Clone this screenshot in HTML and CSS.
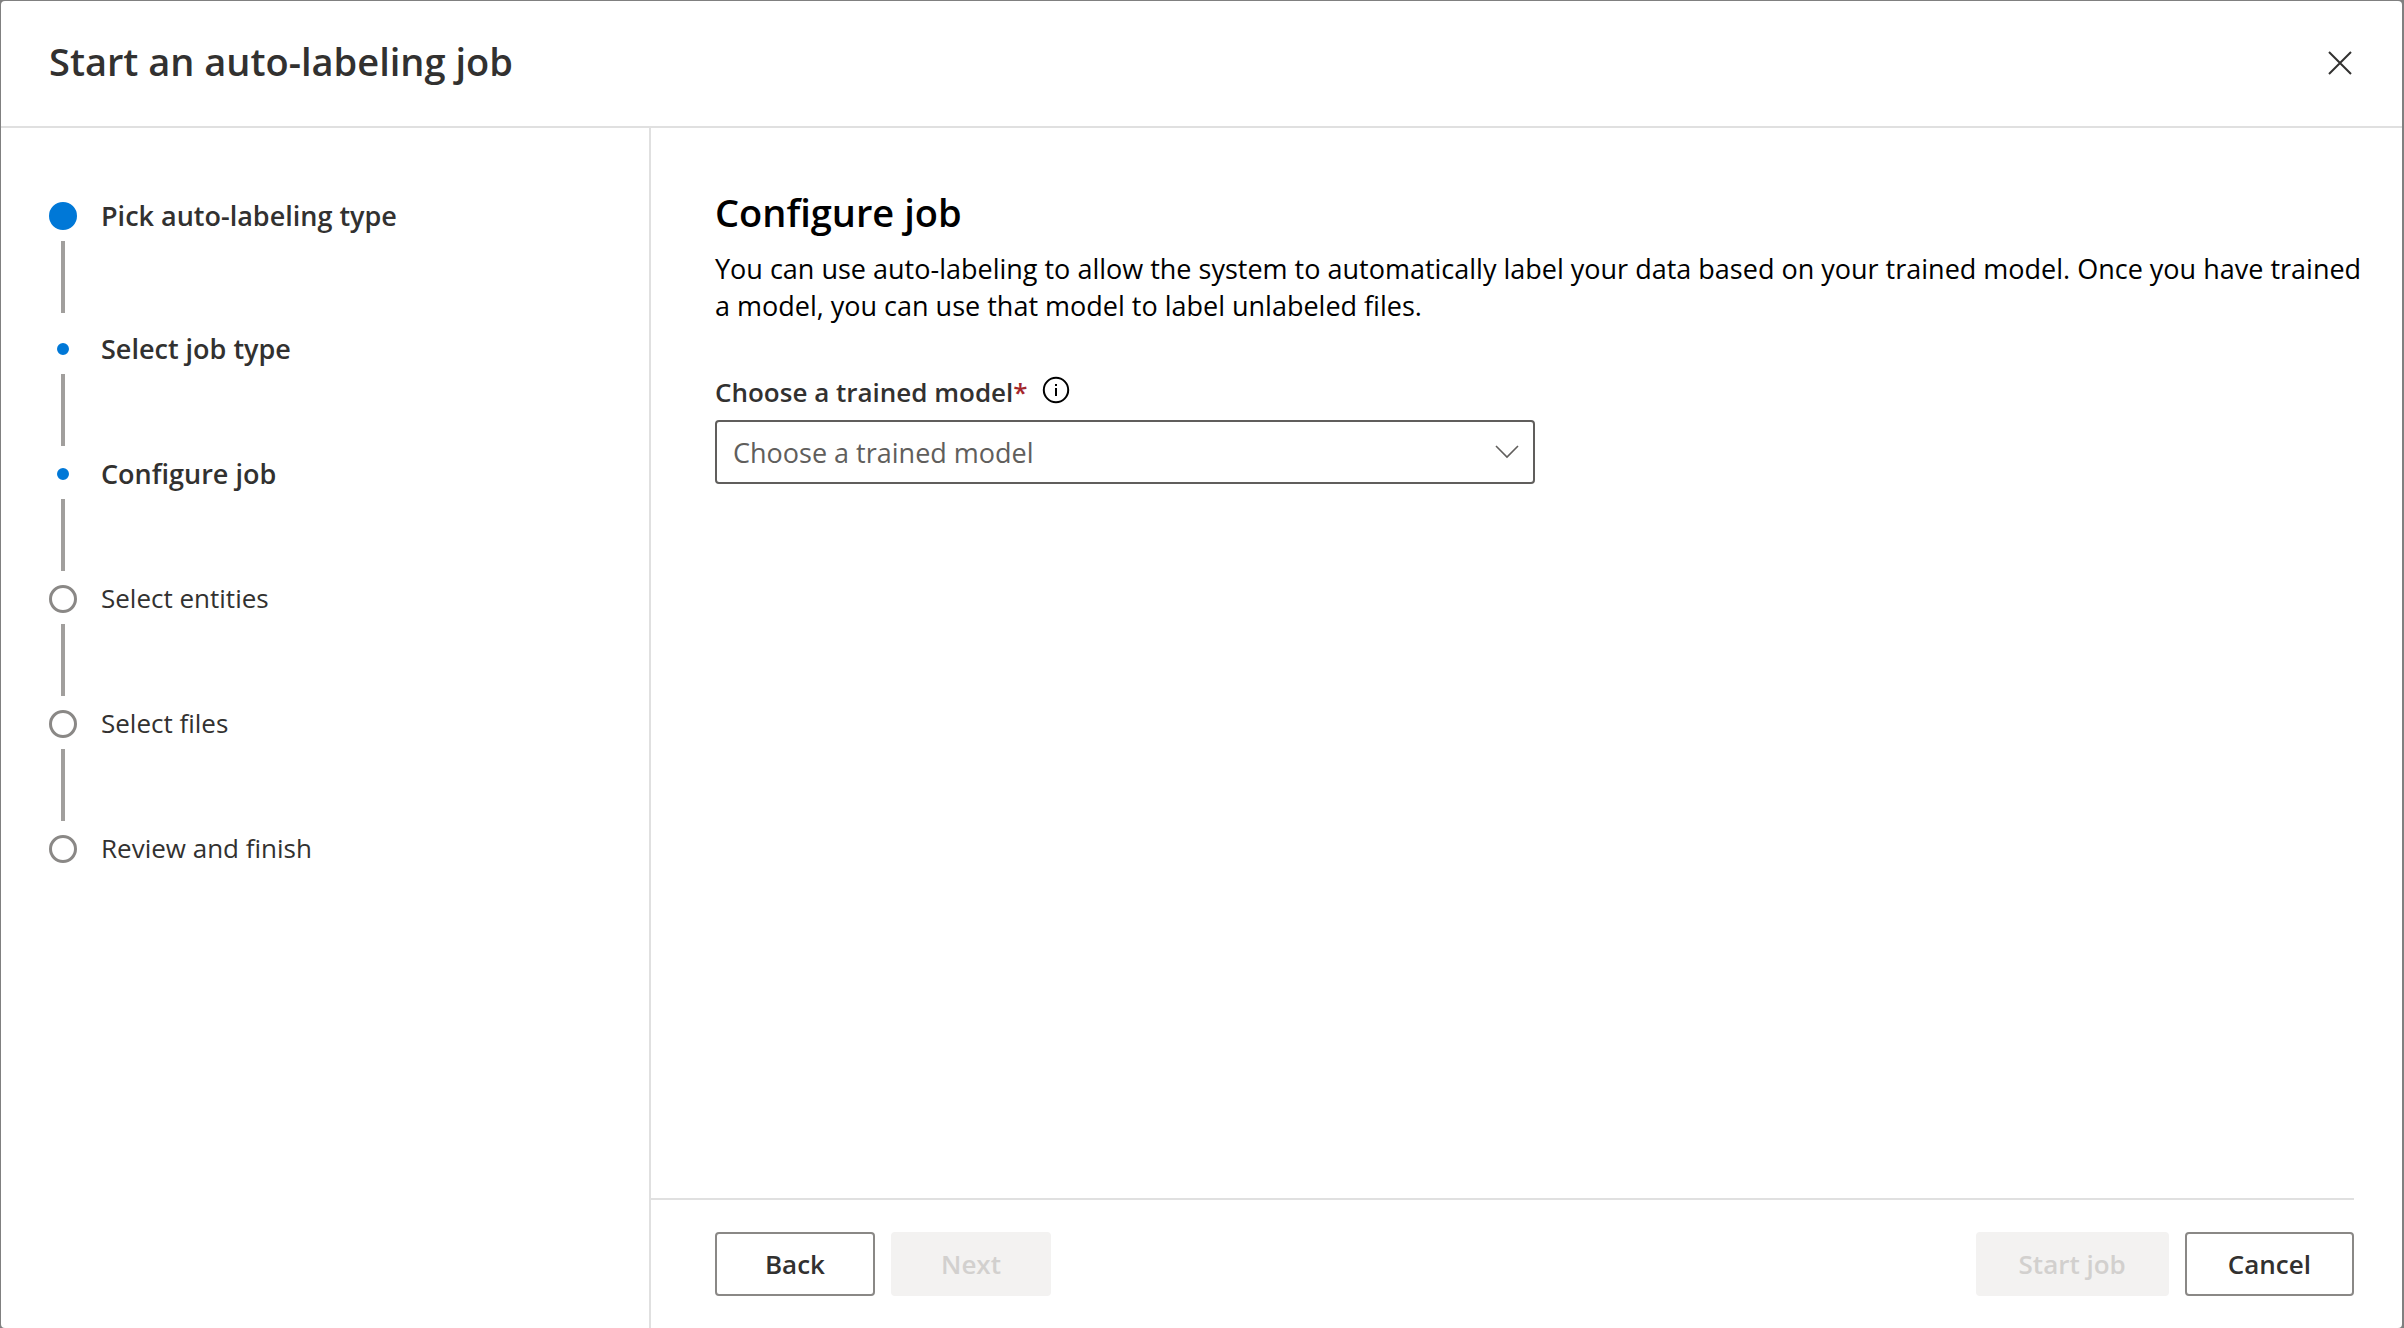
FILE: index.html
```html
<!DOCTYPE html>
<html lang="en">
<head>
    <meta charset="UTF-8">
    <meta name="viewport" content="width=device-width, initial-scale=1.0">
    <title>Start an auto-labeling job</title>
    <link rel="stylesheet" href="styles.css">
</head>
<body>
    <div class="dialog" role="dialog" aria-labelledby="dialog_title">
        <header class="dialog_header">
            <h1 class="dialog_title" id="dialog_title">Start an auto-labeling job</h1>
            <button type="button" class="close" aria-label="Close">
                <svg width="24" height="24" viewBox="0 0 24 24" fill="none" stroke="currentColor" stroke-width="2">
                    <path d="M1 1L23 23M23 1L1 23" />
                </svg>
            </button>
        </header>

        <div class="dialog_body">
            <!-- wizard steps -->
            <nav class="sidebar" aria-label="Steps">
                <ol class="steps">
                    <li class="step main done"><span class="marker"></span><span class="step_name">Pick auto-labeling type</span></li>
                    <li class="step sub done"><span class="marker"></span><span class="step_name">Select job type</span></li>
                    <li class="step sub done" aria-current="step"><span class="marker"></span><span class="step_name">Configure job</span></li>
                    <li class="step"><span class="marker"></span><span class="step_name">Select entities</span></li>
                    <li class="step"><span class="marker"></span><span class="step_name">Select files</span></li>
                    <li class="step"><span class="marker"></span><span class="step_name">Review and finish</span></li>
                </ol>
            </nav>

            <div class="panel">
                <main class="content">
                    <h2 class="content_title">Configure job</h2>
                    <p class="description">You can use auto-labeling to allow the system to automatically label your data based on your trained model. Once you have trained a model, you can use that model to label unlabeled files.</p>

                    <div class="field_head">
                        <label class="field_label" for="model">Choose a trained model<span class="required">*</span></label>
                        <button type="button" class="info" aria-label="More information">
                            <svg width="28" height="28" viewBox="0 0 28 28" fill="none" stroke="currentColor" stroke-width="2">
                                <circle cx="14" cy="14" r="12.2" />
                                <path d="M14 12V20M14 8V10" />
                            </svg>
                        </button>
                    </div>
                    <div class="dropdown">
                        <select class="dropdown_select" id="model" required>
                            <option value="">Choose a trained model</option>
                        </select>
                        <svg class="dropdown_arrow" width="24" height="14" viewBox="0 0 24 14" fill="none" stroke="currentColor" stroke-width="1.6">
                            <path d="M1 1L12 12L23 1" />
                        </svg>
                    </div>
                </main>

                <footer class="actions">
                    <button type="button" class="btn">Back</button>
                    <button type="button" class="btn" disabled>Next</button>
                    <button type="button" class="btn start" disabled>Start job</button>
                    <button type="button" class="btn">Cancel</button>
                </footer>
            </div>
        </div>
    </div>
</body>
</html>
```
FILE: styles.css
```css
*{
    box-sizing: border-box;
    padding: 0;
    margin: 0;
}
body{
    display: flex;
    min-height: 100vh;
    padding: 1px 2px 0 1px;
    background: #808080;
    color: #323130;
    font-family: "Segoe UI", "Open Sans", "Noto Sans", sans-serif;
    font-size: 27px;
    line-height: 37px;
}
button, select{
    font: inherit;
    color: inherit;
}
svg{
    display: block;
}
.dialog{
    flex: 1;
    display: flex;
    flex-direction: column;
    background: #fff;
    border-radius: 4px;
}

/* header */
.dialog_header{
    display: flex;
    align-items: center;
    justify-content: space-between;
    padding: 34px 48px 35px;
    border-bottom: 2px solid #e0e0e0;
}
.dialog_title{
    padding-bottom: 4px;
    font-size: 38px;
    font-weight: 600;
    line-height: 52px;
}
.close, .info{
    background: none;
    border: none;
    cursor: pointer;
}
.close{
    padding: 2px;
}
.info{
    padding-top: 2px;
}
.dialog_body{
    flex: 1;
    display: flex;
}

/* steps */
.sidebar{
    flex: none;
    width: 650px;
    padding: 74px 48px;
    border-right: 2px solid #e0e0e0;
}
.steps{
    list-style: none;
}
.step{
    display: grid;
    grid-template-columns: 28px 1fr;
    grid-template-rows: 28px 72px;
    column-gap: 24px;
    row-gap: 11px;
    align-items: center;
    justify-items: center;
    margin-bottom: 14px;
}
.step.main{
    margin-bottom: 22px;
}
.step:not(:last-child)::after{
    content: "";
    width: 4px;
    height: 72px;
    background: #a19f9d;
}
.marker{
    width: 28px;
    height: 28px;
    border: 3px solid #8a8886;
    border-radius: 50%;
}
.done .marker{
    background: #0078d7;
    border-color: #0078d7;
}
.sub .marker{
    width: 12px;
    height: 12px;
}
.step_name{
    justify-self: start;
    padding-bottom: 2px;
    font-size: 26px;
}
.done .step_name{
    font-size: 27px;
    font-weight: 600;
}

/* right side */
.panel{
    flex: 1;
    display: flex;
    flex-direction: column;
}
.content{
    flex: 1;
    padding: 58px 36px 48px 64px;
    color: #000;
}
.content_title{
    font-size: 38px;
    font-weight: 600;
    line-height: 52px;
}
.description{
    margin-top: 12px;
}
.field_head{
    display: flex;
    align-items: flex-start;
    gap: 14px;
    margin-top: 50px;
}
.field_label{
    color: #323130;
    font-size: 26px;
    font-weight: 600;
}
.required{
    color: #a4262c;
}
.dropdown{
    position: relative;
    width: 50%;
    max-width: 820px;
    margin-top: 9px;
    color: #605e5c;
}
.dropdown_select{
    display: block;
    width: 100%;
    height: 64px;
    padding: 0 56px 0 16px;
    appearance: none;
    background: #fff;
    border: 2px solid #605e5c;
    border-radius: 4px;
}
.dropdown_arrow{
    position: absolute;
    top: 25px;
    right: 16px;
    pointer-events: none;
}

/* footer */
.actions{
    display: flex;
    gap: 16px;
    margin-right: 48px;
    padding: 32px 0 32px 64px;
    border-top: 2px solid #e0e0e0;
}
.btn{
    min-width: 160px;
    height: 64px;
    padding: 0 41px;
    background: #fff;
    border: 2px solid #8a8886;
    border-radius: 4px;
    font-size: 26px;
    font-weight: 600;
    cursor: pointer;
}
.btn:disabled{
    background: #f3f2f1;
    border-color: #f3f2f1;
    color: #d2d0ce;
    cursor: default;
}
.start{
    margin-left: auto;
}
```
